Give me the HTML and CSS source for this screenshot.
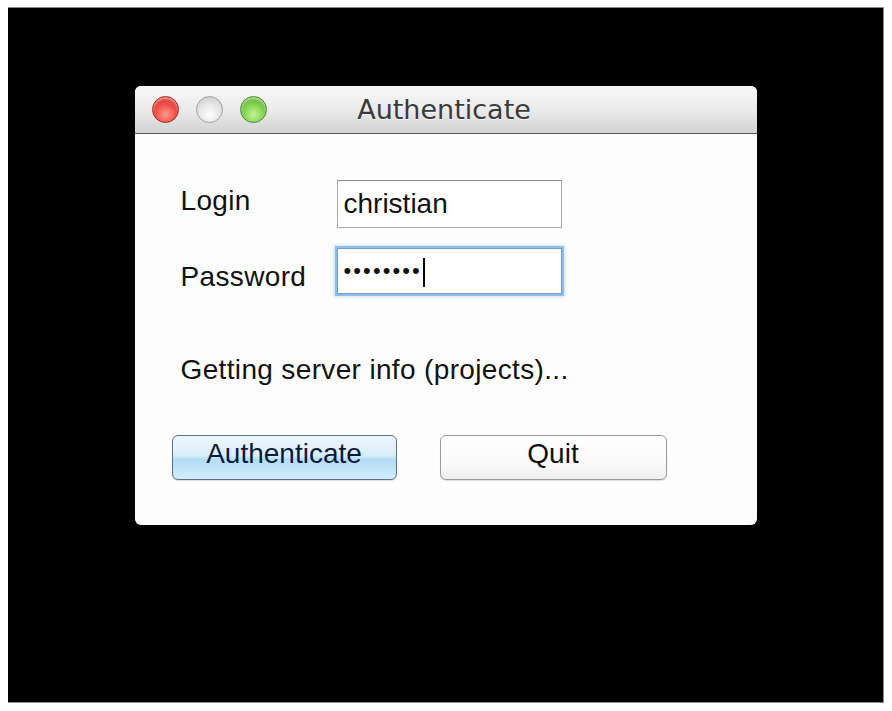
FILE: index.html
```html
<!DOCTYPE html>
<html>
<head>
<meta charset="utf-8">
<link rel="stylesheet" href="styles.css">
</head>
<body>
<div class="stage">
  <div class="window">
    <div class="titlebar">
      <div class="lights">
        <span class="light red"></span>
        <span class="light grey"></span>
        <span class="light green"></span>
      </div>
      <div class="title">Authenticate</div>
    </div>
    <div class="content">
      <div class="form">
        <div class="labels">
          <div class="label">Login</div>
          <div class="label">Password</div>
        </div>
        <div class="fields">
          <div class="input">christian</div>
          <div class="input focused"><span class="dots">••••••••</span><span class="caret"></span></div>
        </div>
      </div>
      <div class="status">Getting server info (projects)...</div>
      <div class="buttons">
        <div class="btn primary">Authenticate</div>
        <div class="btn">Quit</div>
      </div>
    </div>
  </div>
</div>
</body>
</html>
```
FILE: styles.css
```css
html, body {
  margin: 0;
  background: #fff;
}
body {
  padding: 7px 8px 8px 8px;
  font-family: "Liberation Sans", Arial, sans-serif;
}
.stage {
  box-sizing: border-box;
  width: 876px;
  height: 696px;
  background: #000;
  border-top: 1px solid #8a8a8a;
  border-right: 1px solid #8a8a8a;
  border-bottom: 1px solid #8a8a8a;
  padding-top: 78px;
  display: flex;
  justify-content: center;
  align-items: flex-start;
}
.window {
  width: 622px;
  height: 439px;
  background: #fdfdfd;
  border-radius: 6px;
  overflow: hidden;
  display: flex;
  flex-direction: column;
}
.titlebar {
  box-sizing: border-box;
  height: 48px;
  background: linear-gradient(#f8f8f8, #ebebeb 50%, #d2d2d2);
  border-bottom: 1px solid #5a5a5a;
  display: flex;
  align-items: center;
  position: relative;
}
.lights {
  display: flex;
  gap: 17px;
  padding-left: 17px;
  margin-top: -1px;
}
.light {
  box-sizing: border-box;
  width: 27px;
  height: 27px;
  border-radius: 50%;
  display: block;
}
.light.red {
  background: radial-gradient(circle at 50% 70%, #ff9a8e 0%, #f0524a 45%, #c9302a 100%);
  border: 1px solid #a12a25;
  box-shadow: inset 0 2px 2px rgba(255,255,255,.5);
}
.light.grey {
  background: radial-gradient(circle at 50% 70%, #fdfdfd 0%, #e6e6e6 50%, #c4c4c4 100%);
  border: 1px solid #a0a0a0;
}
.light.green {
  background: radial-gradient(circle at 50% 70%, #c4f29a 0%, #86d452 45%, #4f9e2a 100%);
  border: 1px solid #4f8a30;
  box-shadow: inset 0 2px 2px rgba(255,255,255,.5);
}
.title {
  position: absolute;
  left: 0;
  right: 0;
  top: 7px;
  text-align: center;
  font-family: "DejaVu Sans", sans-serif;
  font-size: 27px;
  line-height: 34px;
  color: #3a3a3a;
  text-shadow: 0 1px 0 rgba(255,255,255,.7);
  padding-right: 3px;
}
.content {
  padding: 46px 0 0 46px;
  font-size: 28px;
  line-height: 32px;
  letter-spacing: 0.35px;
  color: #111;
}
.form {
  display: flex;
}
.labels {
  width: 156px;
  display: flex;
  flex-direction: column;
  gap: 44px;
  padding-top: 5px;
}
.fields {
  display: flex;
  flex-direction: column;
  gap: 20px;
}
.input {
  box-sizing: border-box;
  width: 225px;
  height: 48px;
  background: #fff;
  border: 1px solid #a8a8a8;
  border-top-color: #8e8e8e;
  padding: 7px 6px 0 6px;
  color: #111;
  display: flex;
  align-items: flex-start;
  letter-spacing: 0;
}
.input.focused {
  height: 46px;
  border: 1px solid #6d9fd2;
  box-shadow: 0 0 0 2px rgba(120, 175, 230, .75), 0 0 3px 3px rgba(120, 175, 230, .35);
  padding-top: 6px;
}
.dots {
  font-size: 22px;
  letter-spacing: 2.1px;
  line-height: 32px;
}
.caret {
  display: block;
  width: 2px;
  height: 29px;
  background: #000;
  margin-left: 1px;
  margin-top: 3px;
}
.status {
  margin-top: 60px;
}
.buttons {
  display: flex;
  gap: 43px;
  margin-top: 49px;
  margin-left: -9px;
  letter-spacing: 0;
}
.btn {
  box-sizing: border-box;
  width: 227px;
  height: 45px;
  border: 1px solid #9a9a9a;
  border-radius: 6px;
  background: linear-gradient(#ffffff, #fafafa 60%, #f0f0f0);
  display: flex;
  align-items: center;
  justify-content: center;
  padding-bottom: 8px;
  color: #111;
  box-shadow: 0 1px 1px rgba(0,0,0,.12);
}
.btn.primary {
  width: 225px;
  border: 1px solid #5c7090;
  background: linear-gradient(#eef7fd, #d9eefb 45%, #b4dcf6 55%, #d2ecfb);
  color: #0c1a3a;
}
```
